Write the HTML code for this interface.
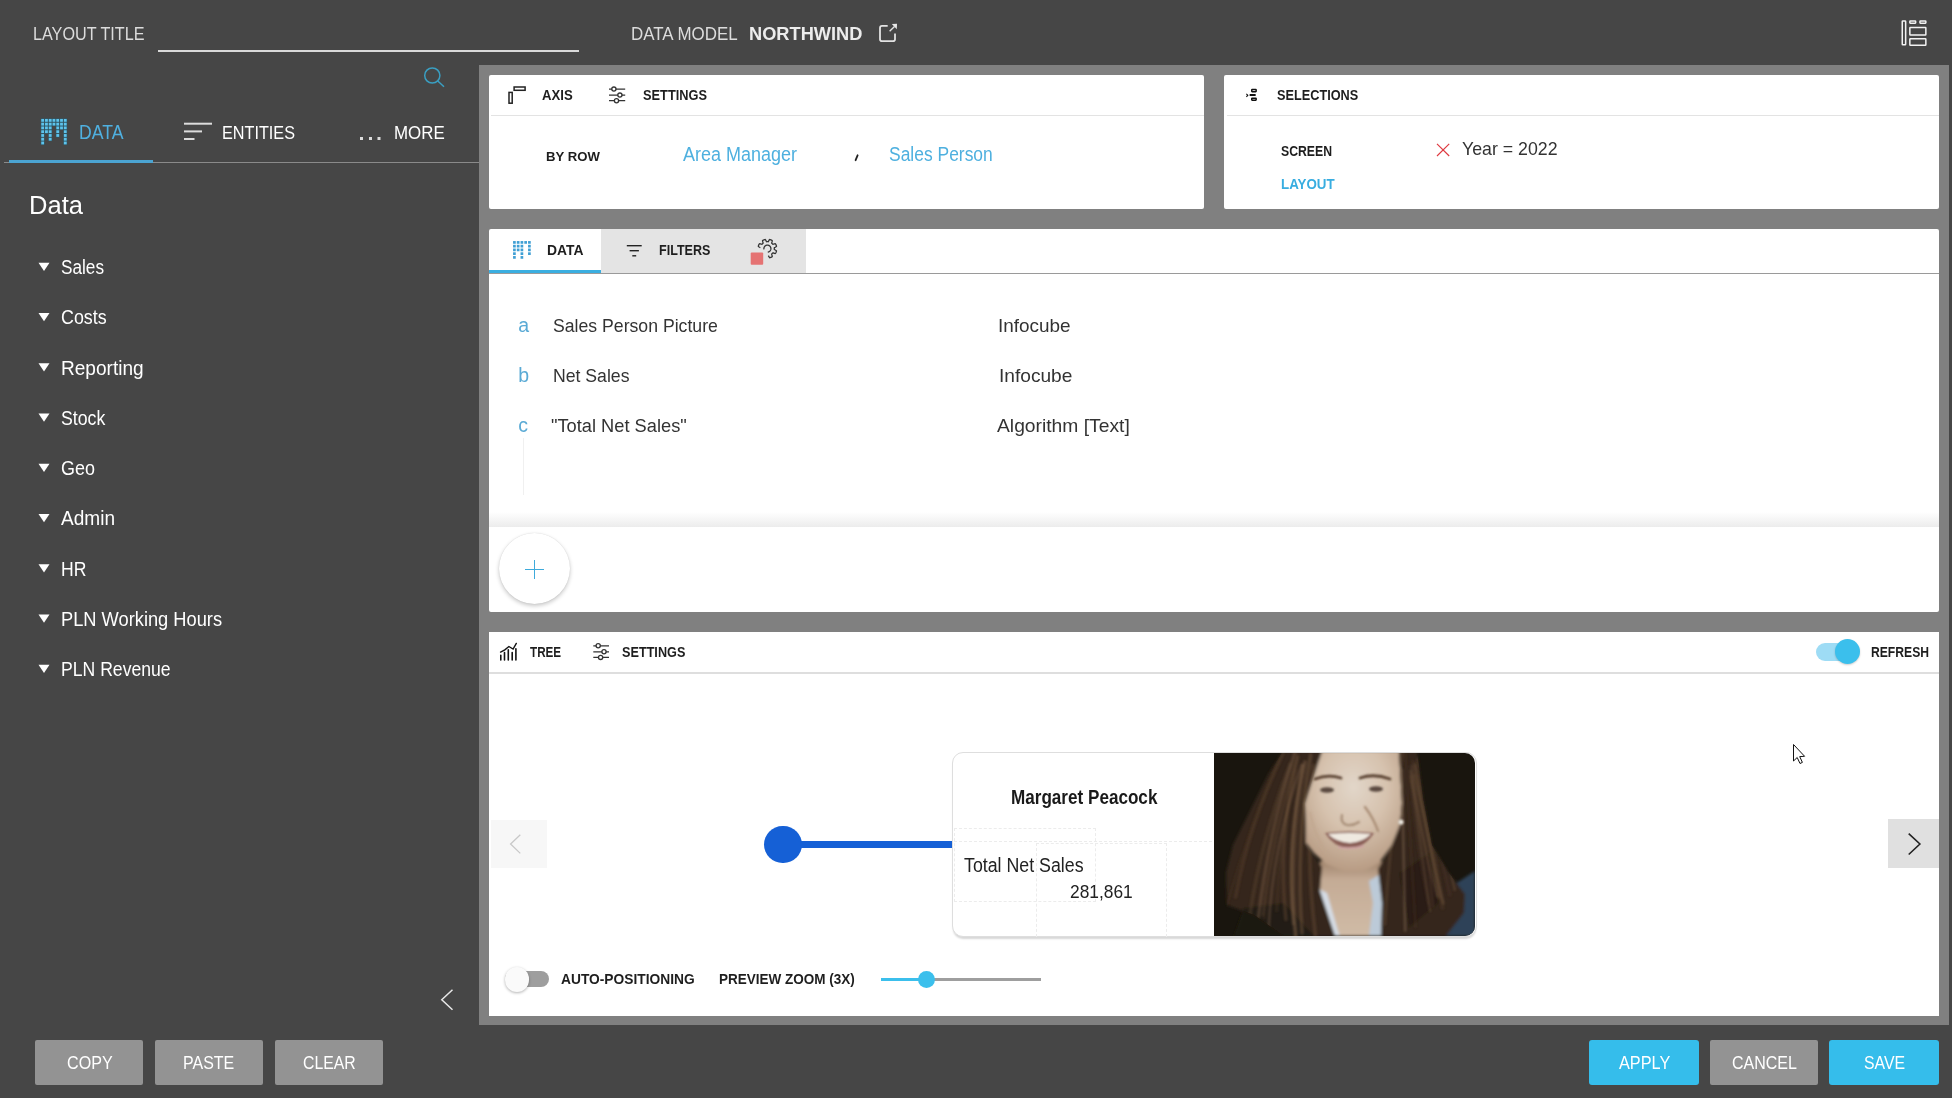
<!DOCTYPE html>
<html><head><meta charset="utf-8">
<style>
html,body{margin:0;padding:0;}
body{width:1952px;height:1098px;overflow:hidden;background:#464646;position:relative;font-family:"Liberation Sans",sans-serif;}
.a{position:absolute;box-sizing:border-box;}
.t{position:absolute;white-space:nowrap;line-height:1;transform-origin:0 0;}
svg{position:absolute;overflow:visible;}
</style></head><body>
<!-- top bar -->
<div class="a" style="left:158px;top:50px;width:421px;height:2px;background:#d9d9d9"></div>
<svg style="left:0;top:0" width="1952" height="1098" viewBox="0 0 1952 1098">
  <!-- external link icon -->
  <g fill="none" stroke="#e2e2e2" stroke-width="1.8">
    <path d="M887.7 25.9 H882 Q880 25.9 880 27.9 V39.3 Q880 41.2 882 41.2 H893 Q895 41.2 895 39.3 V33.5"/>
    <path d="M889.6 31.3 L894.5 26.4" stroke-width="1.4"/>
  </g>
  <path d="M891.8 24 L897 23.8 L896.8 29.2 Z" fill="#e8e8e8"/>
  <!-- top right layout icon -->
  <g fill="none" stroke="#f2f2f2" stroke-width="1.5">
    <rect x="1902.25" y="20.95" width="3.4" height="23.8" rx="0.6"/>
    <rect x="1909.85" y="21.05" width="5.8" height="2.2" rx="0.4"/>
    <rect x="1919.95" y="21.05" width="5.9" height="2.2" rx="0.4"/>
    <rect x="1909.85" y="27.55" width="16" height="7.4" rx="0.5"/>
    <rect x="1909.85" y="38.75" width="16" height="6.4" rx="0.5"/>
  </g>
  <!-- search -->
  <g fill="none" stroke="#3a9fc2" stroke-width="1.5">
    <circle cx="432.3" cy="75.5" r="7.6"/>
    <path d="M437.8 81 L444 86.8"/>
  </g>
  <!-- entities icon -->
  <g fill="#dcdcdc">
    <rect x="184" y="122.7" width="28" height="2"/>
    <rect x="184" y="130.4" width="18" height="2"/>
    <rect x="184" y="138" width="10.5" height="2"/>
    <rect x="360" y="137" width="3" height="3"/>
    <rect x="369" y="137" width="3" height="3"/>
    <rect x="377.5" y="137" width="3" height="3"/>
  </g>
  <!-- big data icon -->
  <g><rect x="40.77" y="118.48" width="3.77" height="3.77" fill="#2c5968"/><rect x="41.26" y="118.97" width="2.8" height="2.8" fill="#5ec3ec"/><rect x="44.55" y="118.48" width="3.77" height="3.77" fill="#2c5968"/><rect x="45.03" y="118.97" width="2.8" height="2.8" fill="#5ec3ec"/><rect x="48.31" y="118.48" width="3.77" height="3.77" fill="#2c5968"/><rect x="48.80" y="118.97" width="2.8" height="2.8" fill="#5ec3ec"/><rect x="52.09" y="118.48" width="3.77" height="3.77" fill="#2c5968"/><rect x="52.57" y="118.97" width="2.8" height="2.8" fill="#5ec3ec"/><rect x="55.85" y="118.48" width="3.77" height="3.77" fill="#2c5968"/><rect x="56.34" y="118.97" width="2.8" height="2.8" fill="#5ec3ec"/><rect x="59.62" y="118.48" width="3.77" height="3.77" fill="#2c5968"/><rect x="60.11" y="118.97" width="2.8" height="2.8" fill="#5ec3ec"/><rect x="63.40" y="118.48" width="3.77" height="3.77" fill="#2c5968"/><rect x="63.88" y="118.97" width="2.8" height="2.8" fill="#5ec3ec"/><rect x="40.77" y="122.25" width="3.77" height="3.77" fill="#2c5968"/><rect x="41.26" y="122.74" width="2.8" height="2.8" fill="#5ec3ec"/><rect x="44.55" y="122.25" width="3.77" height="3.77" fill="#2c5968"/><rect x="45.03" y="122.74" width="2.8" height="2.8" fill="#5ec3ec"/><rect x="48.31" y="122.25" width="3.77" height="3.77" fill="#2c5968"/><rect x="48.80" y="122.74" width="2.8" height="2.8" fill="#5ec3ec"/><rect x="52.09" y="122.25" width="3.77" height="3.77" fill="#2c5968"/><rect x="52.57" y="122.74" width="2.8" height="2.8" fill="#5ec3ec"/><rect x="55.85" y="122.25" width="3.77" height="3.77" fill="#2c5968"/><rect x="56.34" y="122.74" width="2.8" height="2.8" fill="#5ec3ec"/><rect x="59.62" y="122.25" width="3.77" height="3.77" fill="#2c5968"/><rect x="60.11" y="122.74" width="2.8" height="2.8" fill="#5ec3ec"/><rect x="63.40" y="122.25" width="3.77" height="3.77" fill="#2c5968"/><rect x="63.88" y="122.74" width="2.8" height="2.8" fill="#5ec3ec"/><rect x="40.77" y="126.03" width="3.77" height="3.77" fill="#2c5968"/><rect x="41.26" y="126.51" width="2.8" height="2.8" fill="#5ec3ec"/><rect x="44.55" y="126.03" width="3.77" height="3.77" fill="#2c5968"/><rect x="45.03" y="126.51" width="2.8" height="2.8" fill="#5ec3ec"/><rect x="48.31" y="126.03" width="3.77" height="3.77" fill="#2c5968"/><rect x="48.80" y="126.51" width="2.8" height="2.8" fill="#5ec3ec"/><rect x="55.85" y="126.03" width="3.77" height="3.77" fill="#2c5968"/><rect x="56.34" y="126.51" width="2.8" height="2.8" fill="#5ec3ec"/><rect x="59.62" y="126.03" width="3.77" height="3.77" fill="#2c5968"/><rect x="60.11" y="126.51" width="2.8" height="2.8" fill="#5ec3ec"/><rect x="63.40" y="126.03" width="3.77" height="3.77" fill="#2c5968"/><rect x="63.88" y="126.51" width="2.8" height="2.8" fill="#5ec3ec"/><rect x="40.77" y="129.80" width="3.77" height="3.77" fill="#2c5968"/><rect x="41.26" y="130.28" width="2.8" height="2.8" fill="#5ec3ec"/><rect x="44.55" y="129.80" width="3.77" height="3.77" fill="#2c5968"/><rect x="45.03" y="130.28" width="2.8" height="2.8" fill="#5ec3ec"/><rect x="48.31" y="129.80" width="3.77" height="3.77" fill="#2c5968"/><rect x="48.80" y="130.28" width="2.8" height="2.8" fill="#5ec3ec"/><rect x="55.85" y="129.80" width="3.77" height="3.77" fill="#2c5968"/><rect x="56.34" y="130.28" width="2.8" height="2.8" fill="#5ec3ec"/><rect x="63.40" y="129.80" width="3.77" height="3.77" fill="#2c5968"/><rect x="63.88" y="130.28" width="2.8" height="2.8" fill="#5ec3ec"/><rect x="40.77" y="133.57" width="3.77" height="3.77" fill="#2c5968"/><rect x="41.26" y="134.05" width="2.8" height="2.8" fill="#5ec3ec"/><rect x="48.31" y="133.57" width="3.77" height="3.77" fill="#2c5968"/><rect x="48.80" y="134.05" width="2.8" height="2.8" fill="#5ec3ec"/><rect x="55.85" y="133.57" width="3.77" height="3.77" fill="#2c5968"/><rect x="56.34" y="134.05" width="2.8" height="2.8" fill="#5ec3ec"/><rect x="63.40" y="133.57" width="3.77" height="3.77" fill="#2c5968"/><rect x="63.88" y="134.05" width="2.8" height="2.8" fill="#5ec3ec"/><rect x="40.77" y="137.34" width="3.77" height="3.77" fill="#2c5968"/><rect x="41.26" y="137.82" width="2.8" height="2.8" fill="#5ec3ec"/><rect x="48.31" y="137.34" width="3.77" height="3.77" fill="#2c5968"/><rect x="48.80" y="137.82" width="2.8" height="2.8" fill="#5ec3ec"/><rect x="63.40" y="137.34" width="3.77" height="3.77" fill="#2c5968"/><rect x="63.88" y="137.82" width="2.8" height="2.8" fill="#5ec3ec"/><rect x="40.77" y="141.11" width="3.77" height="3.77" fill="#2c5968"/><rect x="41.26" y="141.59" width="2.8" height="2.8" fill="#5ec3ec"/><rect x="63.40" y="141.11" width="3.77" height="3.77" fill="#2c5968"/><rect x="63.88" y="141.59" width="2.8" height="2.8" fill="#5ec3ec"/></g>
  <!-- sidebar triangles -->
  <g fill="#ffffff"><path d="M38.5 262.80 H49.5 L44 271.00 Z"/><path d="M38.5 313.05 H49.5 L44 321.25 Z"/><path d="M38.5 363.30 H49.5 L44 371.50 Z"/><path d="M38.5 413.55 H49.5 L44 421.75 Z"/><path d="M38.5 463.80 H49.5 L44 472.00 Z"/><path d="M38.5 514.05 H49.5 L44 522.25 Z"/><path d="M38.5 564.30 H49.5 L44 572.50 Z"/><path d="M38.5 614.55 H49.5 L44 622.75 Z"/><path d="M38.5 664.80 H49.5 L44 673.00 Z"/></g>
  <!-- left collapse chevron -->
  <path d="M452.5 989.8 L441.8 999.8 L452.5 1009.8" fill="none" stroke="#e8e8e8" stroke-width="1.5"/>
</svg>
<!-- tab underline -->
<div class="a" style="left:4px;top:162px;width:475px;height:1px;background:#8a8a8a"></div>
<div class="a" style="left:9px;top:159.5px;width:144px;height:3px;background:#4ba4d2"></div>

<!-- grey work area -->
<div class="a" style="left:479px;top:65px;width:1470px;height:960px;background:#808080"></div>
<!-- axis panel -->
<div class="a" style="left:489px;top:75px;width:715px;height:134px;background:#fff;border-radius:2px"></div>
<div class="a" style="left:491px;top:115px;width:713px;height:1px;background:#e3e3e3"></div>
<!-- selections panel -->
<div class="a" style="left:1224px;top:75px;width:715px;height:134px;background:#fff;border-radius:2px"></div>
<div class="a" style="left:1227px;top:115px;width:712px;height:1px;background:#e3e3e3"></div>
<!-- data panel -->
<div class="a" style="left:489px;top:229px;width:1450px;height:383px;background:#fff;border-radius:2px"></div>
<div class="a" style="left:601px;top:229px;width:205px;height:44px;background:#e4e4e4"></div>
<div class="a" style="left:489px;top:273px;width:1450px;height:1px;background:#9a9a9a"></div>
<div class="a" style="left:489px;top:270px;width:112px;height:3px;background:#3aaee0"></div>
<div class="a" style="left:523px;top:438px;width:1px;height:57px;background:#f0f0f0"></div>
<div class="a" style="left:489px;top:512px;width:1450px;height:15px;background:linear-gradient(#fff,#ececec)"></div>
<div class="a" style="left:498.5px;top:533px;width:71px;height:71px;border-radius:50%;background:#fff;box-shadow:0 2px 4px rgba(0,0,0,0.22),0 0 1px rgba(0,0,0,0.15)"></div>
<div class="a" style="left:525.2px;top:568.7px;width:19px;height:1.7px;background:#3eaadb"></div>
<div class="a" style="left:533.8px;top:560px;width:1.7px;height:19px;background:#3eaadb"></div>
<!-- tree panel -->
<div class="a" style="left:489px;top:632px;width:1450px;height:384px;background:#fff"></div>
<div class="a" style="left:489px;top:672px;width:1450px;height:2px;background:#dedede"></div>
<div class="a" style="left:1816px;top:643.3px;width:40px;height:17.5px;border-radius:9px;background:#9edcf5"></div>
<div class="a" style="left:1835px;top:639px;width:25px;height:25px;border-radius:50%;background:#3bbfec;box-shadow:0 1px 2px rgba(0,0,0,0.2)"></div>
<!-- nav boxes -->
<div class="a" style="left:491px;top:820px;width:56px;height:48px;background:#f7f7f7"></div>
<div class="a" style="left:1888px;top:819px;width:51px;height:49px;background:#e0e0e0"></div>
<!-- node + line -->
<div class="a" style="left:783px;top:841px;width:170px;height:7px;background:#1560d6"></div>
<div class="a" style="left:764px;top:825.6px;width:37.6px;height:37.6px;border-radius:50%;background:#1560d6"></div>
<!-- card -->
<div class="a" style="left:952.4px;top:751.5px;width:524.4px;height:185.5px;border-radius:11px;background:#fff;border:1px solid #dedede;box-shadow:0 3px 2px -1px rgba(0,0,0,0.16)"></div>
<!-- photo -->
<div class="a" style="left:1214px;top:753px;width:261px;height:183px;border-radius:0 10px 10px 0;overflow:hidden;background:#19150e">
<svg style="left:0;top:0" width="261" height="183" viewBox="0 0 261 183">
<defs>
<filter id="bl" x="-20%" y="-20%" width="140%" height="140%"><feGaussianBlur stdDeviation="1.5"/></filter>
<filter id="bl2" x="-50%" y="-50%" width="200%" height="200%"><feGaussianBlur stdDeviation="0.8"/></filter>
<filter id="bl3" x="-50%" y="-50%" width="200%" height="200%"><feGaussianBlur stdDeviation="1.3"/></filter>
<clipPath id="hairclip"><path d="M69 -2 L108 -2 L99 25 L91 50 L92 92 L108 114 L106 138 L121 183 L70 183 L40 162 L13 152 L12 120 L19 92 L40 50 L55 20 Z"/><path d="M185 -2 L203 -2 L209 45 L218 92 L235 120 L251 141 L250 160 L232 183 L167 183 L168 150 L164 116 L178 92 L186 72 L188 50 Z"/></clipPath>
<radialGradient id="skin" cx="0.5" cy="0.3" r="0.7"><stop offset="0" stop-color="#e2d6c9"/><stop offset="0.5" stop-color="#d6c2ae"/><stop offset="1" stop-color="#b89c84"/></radialGradient>
<linearGradient id="neck" x1="0" y1="0" x2="0" y2="1"><stop offset="0" stop-color="#9f836b"/><stop offset="0.25" stop-color="#c4ab95"/><stop offset="1" stop-color="#d0bba6"/></linearGradient>
</defs>
<g filter="url(#bl)">
<path d="M106 108 L168 108 L160 150 L157 183 L124 183 L106 140 Z" fill="url(#neck)"/>
<path d="M108 -2 L185 -2 L188 50 L186 72 L178 92 L165 110 L150 118 L130 118 L112 111 L100 100 L92 90 L91 50 L99 25 Z" fill="url(#skin)"/>
<path d="M105 136 L113 140 L124 178 L126 183 L104 183 Z" fill="#d5dde6"/>
<path d="M155 128 L168 120 L176 140 L174 183 L155 183 L159 150 Z" fill="#bccad8"/>
<path d="M232 137 L261 118 L261 183 L226 183 Z" fill="#2e4358"/>
<path d="M69 -2 L108 -2 L99 25 L91 50 L92 92 L108 114 L106 138 L121 183 L70 183 L40 162 L13 152 L12 120 L19 92 L40 50 L55 20 Z" fill="#34261a"/>
<path d="M185 -2 L203 -2 L209 45 L218 92 L235 120 L251 141 L250 160 L232 183 L167 183 L168 150 L164 116 L178 92 L186 72 L188 50 Z" fill="#34261a"/>
<path d="M30 155 L70 150 L100 183 L20 183 Z" fill="#1e170f" opacity="0.7"/>
<path d="M185 120 L215 100 L225 150 L195 175 Z" fill="#241a11" opacity="0.6"/>
</g>
<g clip-path="url(#hairclip)"><g filter="url(#bl3)" fill="none" stroke-linecap="round">
<path d="M76.2 11.3 Q47.3 86.7 35.8 162.1" stroke="#6e523a" stroke-width="3.8" opacity="0.30"/>
<path d="M68.8 1.0 Q34.5 72.6 21.6 144.2" stroke="#5f4630" stroke-width="3.3" opacity="0.40"/>
<path d="M69.2 -3.8 Q34.6 74.8 12.6 153.3" stroke="#4e3826" stroke-width="2.3" opacity="0.28"/>
<path d="M80.9 -0.5 Q54.0 81.5 44.5 163.6" stroke="#86684c" stroke-width="3.4" opacity="0.39"/>
<path d="M90.7 8.3 Q70.9 89.6 79.4 171.0" stroke="#7a5d44" stroke-width="2.6" opacity="0.45"/>
<path d="M91.9 9.4 Q74.9 95.7 82.4 182.0" stroke="#7a5d44" stroke-width="3.2" opacity="0.27"/>
<path d="M83.8 3.6 Q63.2 85.0 71.9 166.4" stroke="#6e523a" stroke-width="3.5" opacity="0.39"/>
<path d="M99.5 12.4 Q90.9 97.3 101.4 182.2" stroke="#6e523a" stroke-width="3.9" opacity="0.37"/>
<path d="M89.1 12.5 Q72.0 97.8 81.4 183.1" stroke="#7a5d44" stroke-width="3.4" opacity="0.47"/>
<path d="M83.4 3.9 Q59.0 83.0 48.9 162.0" stroke="#7a5d44" stroke-width="2.3" opacity="0.31"/>
<path d="M84.6 -3.0 Q53.5 80.8 50.1 164.7" stroke="#4e3826" stroke-width="3.7" opacity="0.32"/>
<path d="M81.5 17.1 Q65.3 87.3 62.7 157.6" stroke="#5f4630" stroke-width="3.3" opacity="0.25"/>
<path d="M96.7 2.0 Q81.3 90.9 88.0 179.8" stroke="#7a5d44" stroke-width="3.9" opacity="0.42"/>
<path d="M87.6 11.9 Q58.3 94.0 54.6 176.0" stroke="#86684c" stroke-width="2.8" opacity="0.35"/>
<path d="M188.7 -2.8 Q175.7 84.2 170.8 171.2" stroke="#7a5d44" stroke-width="3.2" opacity="0.28"/>
<path d="M196.4 28.2 Q201.9 89.3 214.3 150.5" stroke="#4e3826" stroke-width="2.3" opacity="0.31"/>
<path d="M191.4 -0.7 Q196.1 86.6 201.6 174.0" stroke="#4e3826" stroke-width="2.6" opacity="0.29"/>
<path d="M200.9 11.8 Q211.6 81.0 229.3 150.3" stroke="#86684c" stroke-width="2.7" opacity="0.42"/>
<path d="M204.0 5.4 Q226.6 71.2 240.8 136.9" stroke="#86684c" stroke-width="2.7" opacity="0.29"/>
<path d="M200.1 22.3 Q216.4 83.5 225.2 144.7" stroke="#5f4630" stroke-width="3.6" opacity="0.45"/>
<path d="M197.7 13.1 Q204.8 78.0 223.2 142.9" stroke="#7a5d44" stroke-width="2.9" opacity="0.30"/>
<path d="M196.0 23.3 Q213.2 88.3 219.0 153.4" stroke="#6e523a" stroke-width="2.4" opacity="0.31"/>
<path d="M187.8 16.8 Q189.2 97.2 191.2 177.6" stroke="#8a7058" stroke-width="2.7" opacity="0.41"/>
<path d="M198.7 8.6 Q222.0 75.2 236.0 141.8" stroke="#4e3826" stroke-width="3.6" opacity="0.33"/>
<path d="M203.2 8.9 Q218.6 82.0 228.5 155.1" stroke="#5f4630" stroke-width="4.0" opacity="0.26"/>
<path d="M196.4 18.0 Q206.0 87.9 216.1 157.9" stroke="#7a5d44" stroke-width="2.3" opacity="0.39"/>
</g></g>
<g filter="url(#bl2)" fill="none" stroke-linecap="round">
<path d="M101 26 Q114 21 127 25" stroke="#5a4232" stroke-width="2.8"/>
<path d="M146 25 Q160 20 176 26" stroke="#5a4232" stroke-width="2.8"/>
<path d="M151 54 Q160 66 164 78" stroke="#a88c74" stroke-width="2.2"/>
<path d="M128 62 Q126 70 133 72 Q139 73 145 69" stroke="#a9907a" stroke-width="2.2"/>
<path d="M96 60 Q100 80 112 100" stroke="#c0a58e" stroke-width="3" opacity="0.6"/>
</g>
<g filter="url(#bl2)">
<ellipse cx="113" cy="37" rx="7" ry="2.8" fill="#5a4a40"/>
<ellipse cx="162" cy="36" rx="7" ry="2.8" fill="#5a4a40"/>
<path d="M111 80 Q136 77 160 80 Q150 95 135 96 Q120 94 111 80 Z" fill="#8a5e56"/>
<path d="M114 81 Q136 79 157 81 Q149 89 136 90 Q122 89 114 81 Z" fill="#efe9e0"/>
<path d="M124 94 Q136 97 150 93" stroke="#d0a4a4" stroke-width="2" fill="none"/>
<circle cx="187" cy="69" r="2.6" fill="#ece8e0"/>
</g>
</svg></div>
<!-- toggle off -->
<div class="a" style="left:505px;top:971.4px;width:44px;height:16px;border-radius:8px;background:#9e9e9e"></div>
<div class="a" style="left:505px;top:967.3px;width:24.4px;height:24.4px;border-radius:50%;background:#fafafa;box-shadow:0 1px 3px rgba(0,0,0,0.3)"></div>
<!-- slider -->
<div class="a" style="left:881px;top:978px;width:45px;height:3px;background:#3bbfec"></div>
<div class="a" style="left:926px;top:978px;width:115px;height:3px;background:#9e9e9e"></div>
<div class="a" style="left:917.5px;top:971px;width:17px;height:17px;border-radius:50%;background:#3bbfec"></div>
<!-- buttons -->
<div class="a" style="left:35px;top:1040px;width:108px;height:44.5px;background:#939393;border-radius:2px"></div>
<div class="a" style="left:155px;top:1040px;width:108px;height:44.5px;background:#939393;border-radius:2px"></div>
<div class="a" style="left:275px;top:1040px;width:108px;height:44.5px;background:#939393;border-radius:2px"></div>
<div class="a" style="left:1589px;top:1040px;width:110px;height:44.5px;background:#35bdeb;border-radius:3px"></div>
<div class="a" style="left:1710px;top:1040px;width:108px;height:44.5px;background:#939393;border-radius:2px"></div>
<div class="a" style="left:1829px;top:1040px;width:110px;height:44.5px;background:#35bdeb;border-radius:3px"></div>

<svg style="left:0;top:0" width="1952" height="1098" viewBox="0 0 1952 1098">
  <!-- axis icon -->
  <g fill="none" stroke="#222" stroke-width="1.5">
    <rect x="509" y="92.4" width="3.2" height="10.8"/>
    <rect x="514.1" y="87" width="11" height="3.3"/>
  </g>
  <!-- settings icons -->
  <g id="set1" fill="none" stroke="#333" stroke-width="1.3">
    <path d="M609 89.1 H625.2 M609 95.1 H625.2 M609 100.7 H625.2"/>
    <circle cx="613.9" cy="89.1" r="2.1" fill="#fff"/>
    <circle cx="619.9" cy="95.1" r="2.1" fill="#fff"/>
    <circle cx="616.5" cy="100.7" r="2.1" fill="#fff"/>
  </g>
  <g fill="none" stroke="#333" stroke-width="1.3">
    <path d="M593.3 645.8 H609 M593.3 651.8 H609 M593.3 657.4 H609"/>
    <circle cx="598.2" cy="645.8" r="2.1" fill="#fff"/>
    <circle cx="604" cy="651.8" r="2.1" fill="#fff"/>
    <circle cx="600.6" cy="657.4" r="2.1" fill="#fff"/>
  </g>
  <!-- selections icon -->
  <g fill="none" stroke="#111" stroke-width="1.5">
    <rect x="1251.75" y="89.55" width="4.4" height="2.1" rx="0.4"/>
    <rect x="1251.75" y="98.15" width="4.4" height="2.1" rx="0.4"/>
  </g>
  <rect x="1249.6" y="94.1" width="6.1" height="1.8" rx="0.5" fill="#111"/>
  <path d="M1246.3 93.9 L1247.8 95.2 L1246.4 96.8" fill="none" stroke="#111" stroke-width="1.1"/>
  <!-- red X -->
  <path d="M1437 143.8 L1449.2 156 M1449.2 143.8 L1437 156" stroke="#de3a40" stroke-width="1.15" fill="none"/>
  <!-- small data icon -->
  <g><rect x="513.05" y="241.05" width="2.7" height="2.7" fill="#3f9fd4"/><rect x="516.80" y="241.05" width="2.7" height="2.7" fill="#3f9fd4"/><rect x="520.55" y="241.05" width="2.7" height="2.7" fill="#3f9fd4"/><rect x="524.30" y="241.05" width="2.7" height="2.7" fill="#3f9fd4"/><rect x="528.05" y="241.05" width="2.7" height="2.7" fill="#3f9fd4"/><rect x="513.05" y="244.80" width="2.7" height="2.7" fill="#3f9fd4"/><rect x="516.80" y="244.80" width="2.7" height="2.7" fill="#3f9fd4"/><rect x="520.55" y="244.80" width="2.7" height="2.7" fill="#3f9fd4"/><rect x="528.05" y="244.80" width="2.7" height="2.7" fill="#3f9fd4"/><rect x="513.05" y="248.55" width="2.7" height="2.7" fill="#3f9fd4"/><rect x="516.80" y="248.55" width="2.7" height="2.7" fill="#3f9fd4"/><rect x="520.55" y="248.55" width="2.7" height="2.7" fill="#3f9fd4"/><rect x="528.05" y="248.55" width="2.7" height="2.7" fill="#3f9fd4"/><rect x="513.05" y="252.30" width="2.7" height="2.7" fill="#3f9fd4"/><rect x="520.55" y="252.30" width="2.7" height="2.7" fill="#3f9fd4"/><rect x="528.05" y="252.30" width="2.7" height="2.7" fill="#3f9fd4"/><rect x="513.05" y="256.05" width="2.7" height="2.7" fill="#3f9fd4"/><rect x="520.55" y="256.05" width="2.7" height="2.7" fill="#3f9fd4"/></g>
  <!-- filter icon -->
  <g fill="#222">
    <rect x="626.8" y="245" width="14.9" height="1.4"/>
    <rect x="629.6" y="250" width="9.3" height="1.4"/>
    <rect x="632.3" y="255.1" width="3.9" height="1.4"/>
  </g>
  <!-- gear -->
  <g fill="none" stroke="#333" stroke-width="1.3">
    <path d="M760.34 247.61 L759.60 247.23 L758.77 246.77 L758.31 246.33 L758.36 246.01 L758.46 245.70 L758.57 245.39 L758.68 245.08 L758.81 244.78 L758.95 244.48 L759.10 244.19 L759.26 243.90 L759.62 243.74 L760.45 243.91 L761.35 244.20 L761.94 244.33 L762.11 244.16 L762.27 243.98 L762.44 243.81 L762.61 243.64 L762.78 243.47 L762.96 243.31 L763.13 243.14 L763.00 242.55 L762.71 241.65 L762.54 240.82 L762.70 240.46 L762.99 240.30 L763.28 240.15 L763.58 240.01 L763.88 239.88 L764.19 239.77 L764.50 239.66 L764.81 239.56 L765.13 239.51 L765.57 239.97 L766.03 240.80 L766.41 241.54 L766.68 241.74 L766.92 241.72 L767.16 241.70 L767.40 241.70 L767.64 241.70 L767.88 241.72 L768.12 241.74 L768.39 241.54 L768.77 240.80 L769.23 239.97 L769.67 239.51 L769.99 239.56 L770.30 239.66 L770.61 239.77 L770.92 239.88 L771.22 240.01 L771.52 240.15 L771.81 240.30 L772.10 240.46 L772.26 240.82 L772.09 241.65 L771.80 242.55 L771.67 243.14 L771.84 243.31 L772.02 243.47 L772.19 243.64 L772.36 243.81 L772.53 243.98 L772.69 244.16 L772.86 244.33 L773.45 244.20 L774.35 243.91 L775.18 243.74 L775.54 243.90 L775.70 244.19 L775.85 244.48 L775.99 244.78 L776.12 245.08 L776.23 245.39 L776.34 245.70 L776.44 246.01 L776.49 246.33 L776.03 246.77 L775.20 247.23 L774.46 247.61 L774.26 247.88 L774.28 248.12 L774.30 248.36 L774.30 248.60 L774.30 248.84 L774.28 249.08 L774.26 249.32 L774.46 249.59 L775.20 249.97 L776.03 250.43 L776.49 250.87 L776.44 251.19 L776.34 251.50 L776.23 251.81 L776.12 252.12 L775.99 252.42 L775.85 252.72 L775.70 253.01 L775.54 253.30 L775.18 253.46 L774.35 253.29 L773.45 253.00 L772.86 252.87 L772.69 253.04 L772.53 253.22 L772.36 253.39 L772.19 253.56 L772.02 253.73 L771.84 253.89 L771.67 254.06 L771.80 254.65 L772.09 255.55 L772.26 256.38 L772.10 256.74 L771.81 256.90 L771.52 257.05 L771.22 257.19 L770.92 257.32 L770.61 257.43 L770.30 257.54 L769.99 257.64 L769.67 257.69 L769.23 257.23 L768.77 256.40 L768.39 255.66 M763.98 249.33 L763.93 249.09 L763.91 248.84 L763.90 248.60 L763.91 248.36 L763.93 248.11 L763.98 247.87 L764.04 247.64 L764.11 247.40 L764.20 247.18 L764.31 246.96 L764.43 246.75 L764.57 246.54 L764.72 246.35 L764.88 246.17 L765.06 246.00 L765.25 245.84 L765.44 245.70 L765.65 245.57 L765.87 245.45 L766.09 245.35 L766.32 245.27 L766.55 245.20 L766.79 245.15 L767.03 245.12 L767.28 245.10 L767.52 245.10 L767.77 245.12 L768.01 245.15 L768.25 245.20 L768.48 245.27 L768.71 245.35 L768.93 245.45 L769.15 245.57 L769.36 245.70 L769.55 245.84 L769.74 246.00 L769.92 246.17 L770.08 246.35 L770.23 246.54 L770.37 246.75 L770.49 246.96 L770.60 247.18 L770.69 247.40 L770.76 247.64 L770.82 247.87 L770.87 248.11 L770.89 248.36 L770.90 248.60 L770.89 248.84 L770.87 249.09 L770.82 249.33 L770.76 249.56 L770.69 249.80 L770.60 250.02 L770.49 250.24 L770.37 250.45 L770.23 250.66 L770.08 250.85 L769.92 251.03 L769.74 251.20 L769.55 251.36 L769.36 251.50 L769.15 251.63 L768.93 251.75 L768.71 251.85 L768.48 251.93 L768.25 252.00 L768.01 252.05 L767.77 252.08"/>
  </g>
  <rect x="750.7" y="252.4" width="12.5" height="12.3" rx="1" fill="#e57373"/>
  <!-- letters a b c -->
  <!-- tree icon -->
  <g stroke="#111" stroke-width="1.6" fill="none" stroke-linecap="round">
    <path d="M500.8 655.2 V660 M504.5 652.6 V660 M508.3 649.9 V660 M512.2 652.6 V660 M515.9 648.8 V660"/>
    <path d="M500.6 652.1 L504.8 649.8 L508.9 646.5 L513.1 649.1 L516.3 643.4" stroke-width="1.4"/>
  </g>
  <!-- chevrons -->
  <path d="M520.3 834.7 L510.6 844 L520.3 853.4" fill="none" stroke="#c8c8c8" stroke-width="1.3"/>
  <path d="M1908.7 833.6 L1919.9 844 L1908.7 854.5" fill="none" stroke="#222" stroke-width="1.6"/>
  <path d="M857.6 155.3 L855.6 160.2" stroke="#222" stroke-width="1.8" stroke-linecap="round"/>
  <!-- cursor -->
  <path d="M1793.5 744.5 V761 L1797.2 757.5 L1800 763.5 L1802.4 762.4 L1799.7 756.6 L1804.6 756.3 Z" fill="#fff" stroke="#111" stroke-width="1"/>
</svg>
<!-- card dashed inner lines -->
<div class="a" style="left:954px;top:828px;width:142px;height:74px;border:1px dashed #ececec"></div>
<div class="a" style="left:1036px;top:843px;width:131px;height:94px;border:1px dashed #ececec;border-bottom:none"></div>
<div class="a" style="left:954px;top:841px;width:258px;height:1px;border-top:1px dashed #ececec"></div>
<span class="t" style="left:33.45px;top:23.78px;font-size:19.04px;font-weight:400;color:#dcdcdc;transform:scaleX(0.8506);">LAYOUT TITLE</span>
<span class="t" style="left:631.35px;top:26.36px;font-size:17.88px;font-weight:400;color:#dcdcdc;transform:scaleX(0.9483);">DATA MODEL</span>
<span class="t" style="left:749.28px;top:26.36px;font-size:17.88px;font-weight:700;color:#ececec;transform:scaleX(1.0208);">NORTHWIND</span>
<span class="t" style="left:78.79px;top:122.73px;font-size:19.33px;font-weight:400;color:#4fb0e0;transform:scaleX(0.9124);">DATA</span>
<span class="t" style="left:222.13px;top:124.42px;font-size:18.75px;font-weight:400;color:#ffffff;transform:scaleX(0.8651);">ENTITIES</span>
<span class="t" style="left:394.10px;top:124.42px;font-size:18.75px;font-weight:400;color:#ffffff;transform:scaleX(0.9024);">MORE</span>
<span class="t" style="left:28.84px;top:191.87px;font-size:26.02px;font-weight:400;color:#ffffff;transform:scaleX(0.9816);">Data</span>
<span class="t" style="left:60.50px;top:257.73px;font-size:19.33px;font-weight:400;color:#ffffff;transform:scaleX(0.8892);">Sales</span>
<span class="t" style="left:60.50px;top:307.98px;font-size:19.33px;font-weight:400;color:#ffffff;transform:scaleX(0.9232);">Costs</span>
<span class="t" style="left:60.51px;top:359.23px;font-size:19.33px;font-weight:400;color:#ffffff;transform:scaleX(0.9859);">Reporting</span>
<span class="t" style="left:60.50px;top:409.48px;font-size:19.33px;font-weight:400;color:#ffffff;transform:scaleX(0.9163);">Stock</span>
<span class="t" style="left:60.50px;top:458.73px;font-size:19.33px;font-weight:400;color:#ffffff;transform:scaleX(0.9278);">Geo</span>
<span class="t" style="left:60.50px;top:508.98px;font-size:19.33px;font-weight:400;color:#ffffff;transform:scaleX(0.9864);">Admin</span>
<span class="t" style="left:60.59px;top:560.23px;font-size:19.33px;font-weight:400;color:#ffffff;transform:scaleX(0.9088);">HR</span>
<span class="t" style="left:60.55px;top:610.48px;font-size:19.33px;font-weight:400;color:#ffffff;transform:scaleX(0.9451);">PLN Working Hours</span>
<span class="t" style="left:60.59px;top:659.73px;font-size:19.33px;font-weight:400;color:#ffffff;transform:scaleX(0.9107);">PLN Revenue</span>
<span class="t" style="left:541.80px;top:88.99px;font-size:13.95px;font-weight:700;color:#1e1e1e;transform:scaleX(0.9431);">AXIS</span>
<span class="t" style="left:642.70px;top:88.99px;font-size:13.95px;font-weight:700;color:#1e1e1e;transform:scaleX(0.9179);">SETTINGS</span>
<span class="t" style="left:545.80px;top:150.23px;font-size:13.66px;font-weight:700;color:#1e1e1e;transform:scaleX(0.9636);">BY ROW</span>
<span class="t" style="left:683.00px;top:145.43px;font-size:19.33px;font-weight:400;color:#4eb0df;transform:scaleX(0.9306);">Area Manager</span>
<span class="t" style="left:889.40px;top:145.43px;font-size:19.33px;font-weight:400;color:#4eb0df;transform:scaleX(0.9027);">Sales Person</span>
<span class="t" style="left:1276.80px;top:89.09px;font-size:13.95px;font-weight:700;color:#1e1e1e;transform:scaleX(0.9126);">SELECTIONS</span>
<span class="t" style="left:1280.60px;top:144.81px;font-size:13.81px;font-weight:700;color:#1e1e1e;transform:scaleX(0.8882);">SCREEN</span>
<span class="t" style="left:1281.20px;top:176.76px;font-size:14.1px;font-weight:700;color:#38ade0;transform:scaleX(0.9468);">LAYOUT</span>
<span class="t" style="left:1461.80px;top:139.72px;font-size:18.17px;font-weight:400;color:#333333;transform:scaleX(0.9778);">Year = 2022</span>
<span class="t" style="left:547.30px;top:244.09px;font-size:13.95px;font-weight:700;color:#1e1e1e;transform:scaleX(0.9953);">DATA</span>
<span class="t" style="left:659.40px;top:244.09px;font-size:13.95px;font-weight:700;color:#1e1e1e;transform:scaleX(0.9006);">FILTERS</span>
<span class="t" style="left:552.80px;top:317.17px;font-size:18.46px;font-weight:400;color:#333333;transform:scaleX(0.9575);">Sales Person Picture</span>
<span class="t" style="left:998.17px;top:317.17px;font-size:18.46px;font-weight:400;color:#333333;transform:scaleX(1.0262);">Infocube</span>
<span class="t" style="left:552.54px;top:367.17px;font-size:18.46px;font-weight:400;color:#333333;transform:scaleX(0.9566);">Net Sales</span>
<span class="t" style="left:998.86px;top:367.17px;font-size:18.46px;font-weight:400;color:#333333;transform:scaleX(1.0377);">Infocube</span>
<span class="t" style="left:551.00px;top:417.17px;font-size:18.46px;font-weight:400;color:#333333;transform:scaleX(0.9901);">"Total Net Sales"</span>
<span class="t" style="left:997.40px;top:417.17px;font-size:18.46px;font-weight:400;color:#333333;transform:scaleX(1.0450);">Algorithm [Text]</span>
<span class="t" style="left:529.60px;top:644.82px;font-size:14.39px;font-weight:700;color:#1e1e1e;transform:scaleX(0.8129);">TREE</span>
<span class="t" style="left:622.00px;top:644.82px;font-size:14.39px;font-weight:700;color:#1e1e1e;transform:scaleX(0.8811);">SETTINGS</span>
<span class="t" style="left:1870.70px;top:644.72px;font-size:14.39px;font-weight:700;color:#1e1e1e;transform:scaleX(0.8447);">REFRESH</span>
<span class="t" style="left:1011.03px;top:787.59px;font-size:19.62px;font-weight:700;color:#1a1a1a;transform:scaleX(0.8721);">Margaret Peacock</span>
<span class="t" style="left:964.00px;top:856.16px;font-size:19.77px;font-weight:400;color:#222222;transform:scaleX(0.8996);">Total Net Sales</span>
<span class="t" style="left:1069.60px;top:883.66px;font-size:17.88px;font-weight:400;color:#222222;transform:scaleX(0.9718);">281,861</span>
<span class="t" style="left:561.00px;top:972.19px;font-size:14.54px;font-weight:700;color:#1e1e1e;transform:scaleX(0.9481);">AUTO-POSITIONING</span>
<span class="t" style="left:719.32px;top:971.35px;font-size:15.41px;font-weight:700;color:#1e1e1e;transform:scaleX(0.8765);">PREVIEW ZOOM (3X)</span>
<span class="t" style="left:66.60px;top:1054.25px;font-size:18.6px;font-weight:400;color:#ffffff;transform:scaleX(0.8663);">COPY</span>
<span class="t" style="left:183.04px;top:1054.25px;font-size:18.6px;font-weight:400;color:#ffffff;transform:scaleX(0.8594);">PASTE</span>
<span class="t" style="left:303.00px;top:1054.25px;font-size:18.6px;font-weight:400;color:#ffffff;transform:scaleX(0.8494);">CLEAR</span>
<span class="t" style="left:1618.50px;top:1052.75px;font-size:19.19px;font-weight:400;color:#ffffff;transform:scaleX(0.8476);">APPLY</span>
<span class="t" style="left:1731.60px;top:1052.75px;font-size:19.19px;font-weight:400;color:#ffffff;transform:scaleX(0.8328);">CANCEL</span>
<span class="t" style="left:1863.60px;top:1052.75px;font-size:19.19px;font-weight:400;color:#ffffff;transform:scaleX(0.8250);">SAVE</span>
<span class="t" style="left:518.3px;top:315.5px;font-size:19.5px;color:#5aaad5">a</span>
<span class="t" style="left:518.3px;top:365.5px;font-size:19.5px;color:#5aaad5">b</span>
<span class="t" style="left:518.3px;top:415.5px;font-size:19.5px;color:#5aaad5">c</span>

</body></html>
